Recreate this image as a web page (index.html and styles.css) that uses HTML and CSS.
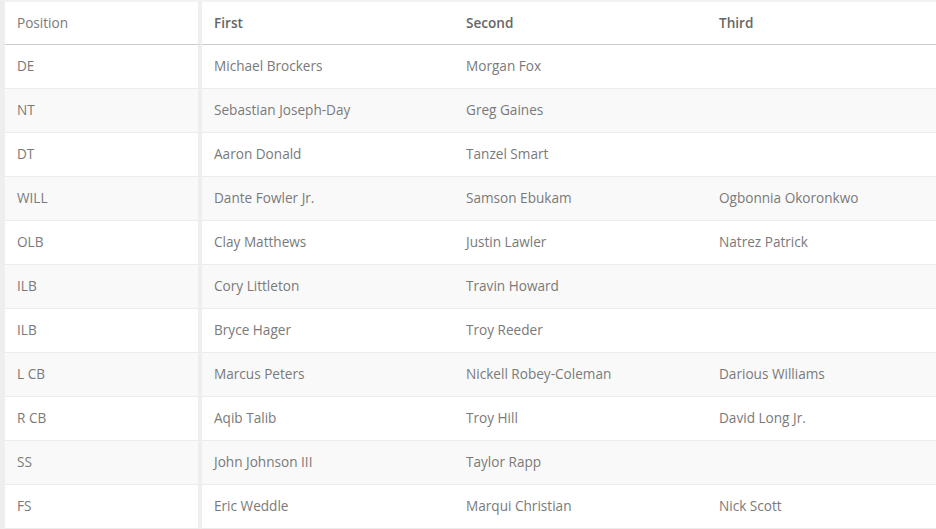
FILE: index.html
```html
<!DOCTYPE html>
<html>
<head>
<meta charset="utf-8">
<link rel="stylesheet" href="styles.css">
</head>
<body>
<div class="wrap">
<table class="depth">
  <thead>
    <tr>
      <th class="pos">Position</th>
      <th class="c1">First</th>
      <th class="c2">Second</th>
      <th class="c3">Third</th>
    </tr>
  </thead>
  <tbody>
    <tr><td class="pos">DE</td><td>Michael Brockers</td><td>Morgan Fox</td><td></td></tr>
    <tr><td class="pos">NT</td><td>Sebastian Joseph-Day</td><td>Greg Gaines</td><td></td></tr>
    <tr><td class="pos">DT</td><td>Aaron Donald</td><td>Tanzel Smart</td><td></td></tr>
    <tr><td class="pos">WILL</td><td>Dante Fowler Jr.</td><td>Samson Ebukam</td><td>Ogbonnia Okoronkwo</td></tr>
    <tr><td class="pos">OLB</td><td>Clay Matthews</td><td>Justin Lawler</td><td>Natrez Patrick</td></tr>
    <tr><td class="pos">ILB</td><td>Cory Littleton</td><td>Travin Howard</td><td></td></tr>
    <tr><td class="pos">ILB</td><td>Bryce Hager</td><td>Troy Reeder</td><td></td></tr>
    <tr><td class="pos">L CB</td><td>Marcus Peters</td><td>Nickell Robey-Coleman</td><td>Darious Williams</td></tr>
    <tr><td class="pos">R CB</td><td>Aqib Talib</td><td>Troy Hill</td><td>David Long Jr.</td></tr>
    <tr><td class="pos">SS</td><td>John Johnson III</td><td>Taylor Rapp</td><td></td></tr>
    <tr><td class="pos">FS</td><td>Eric Weddle</td><td>Marqui Christian</td><td>Nick Scott</td></tr>
  </tbody>
</table>
</div>
</body>
</html>
```
FILE: styles.css
```css
html, body {
  margin: 0;
  padding: 0;
  background: #fff;
  overflow: hidden;
}
.wrap {
  border-left: 5px solid #eeeeee;
  border-top: 2px solid #f2f2f2;
  width: 1200px;
}
.depth {
  border-collapse: separate;
  border-spacing: 0;
  table-layout: fixed;
  width: 1100px;
  font-family: "Open Sans", "Noto Sans", sans-serif;
  font-size: 13.6px;
  color: #7a7a7a;
}
.depth th,
.depth td {
  box-sizing: border-box;
  text-align: left;
  padding: 0 12px 2px;
  height: 44px;
  border-bottom: 1px solid #ececec;
  white-space: nowrap;
  vertical-align: middle;
}
.depth th {
  height: 43px;
  font-weight: 600;
  color: #666;
  border-bottom-color: #cccccc;
}
.depth th.pos {
  font-weight: 400;
  color: #7a7a7a;
}
.depth .pos {
  width: 197px;
  border-right: 4px solid #eeeeee;
}
.depth .c1 { width: 252px; }
.depth .c2 { width: 253px; }
.depth tbody tr:nth-child(even) td {
  background: #f9f9f9;
}
```
